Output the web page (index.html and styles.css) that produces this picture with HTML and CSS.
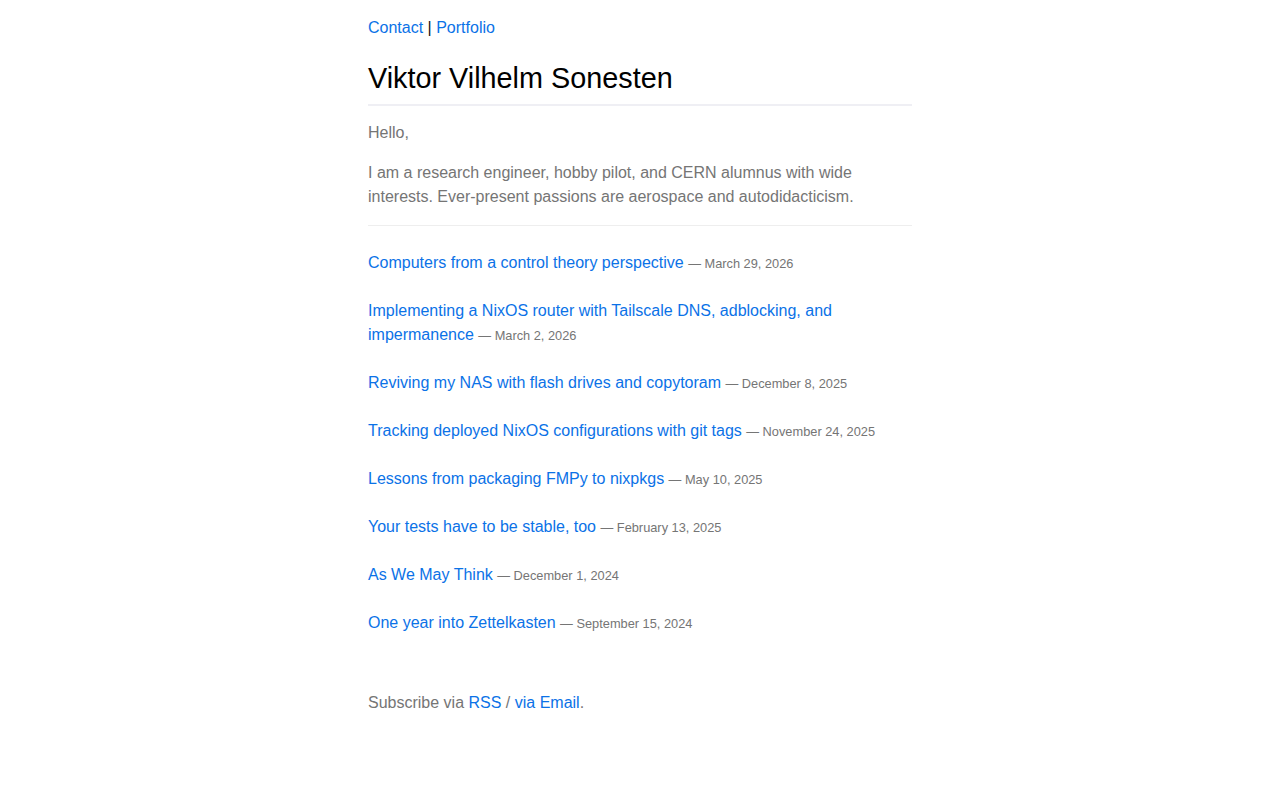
FILE: index.html
```html
<!DOCTYPE html>
<html lang="en">
<head>
    <meta charset="UTF-8">
    <meta name="viewport" content="width=device-width, initial-scale=1.0">
    <title>Viktor Vilhelm Sonesten</title>
    <link rel="stylesheet" href="styles.css">
</head>
<body>
    <div class="container">
        <nav class="nav">
            <a href="#">Contact</a> | <a href="#">Portfolio</a>
        </nav>

        <h1>Viktor Vilhelm Sonesten</h1>

        <p class="intro">Hello,</p>
        <p class="intro">I am a research engineer, hobby pilot, and CERN alumnus with wide interests. Ever-present passions are aerospace and autodidacticism.</p>

        <hr>

        <!-- posts -->
        <ul class="posts">
            <li><a href="#">Computers from a control theory perspective</a> <span class="date">— March 29, 2026</span></li>
            <li><a href="#">Implementing a NixOS router with Tailscale DNS, adblocking, and impermanence</a> <span class="date">— March 2, 2026</span></li>
            <li><a href="#">Reviving my NAS with flash drives and copytoram</a> <span class="date">— December 8, 2025</span></li>
            <li><a href="#">Tracking deployed NixOS configurations with git tags</a> <span class="date">— November 24, 2025</span></li>
            <li><a href="#">Lessons from packaging FMPy to nixpkgs</a> <span class="date">— May 10, 2025</span></li>
            <li><a href="#">Your tests have to be stable, too</a> <span class="date">— February 13, 2025</span></li>
            <li><a href="#">As We May Think</a> <span class="date">— December 1, 2024</span></li>
            <li><a href="#">One year into Zettelkasten</a> <span class="date">— September 15, 2024</span></li>
        </ul>

        <p class="subscribe">Subscribe via <a href="#">RSS</a> / <a href="#">via Email</a>.</p>
    </div>
</body>
</html>
```

FILE: styles.css
```css
/* base */
body {
    margin: 0;
    padding: 16px 0;
    font-family: "Liberation Sans", Arial, sans-serif;
    font-size: 16px;
    line-height: 24px;
    color: #757575;
    background-color: #fff;
}
.container {
    width: 544px;
    margin: 0 auto;
}
a {
    color: #0b72e7;
    text-decoration: none;
}

/* header */
.nav {
    color: #111;
}
h1 {
    margin: 18px 0 15px;
    padding-bottom: 6px;
    font-size: 28.8px;
    font-weight: normal;
    line-height: 40px;
    color: #000;
    border-bottom: 2px solid #efeff4;
}
.intro {
    margin: 0 0 16px;
}

hr {
    margin: 16px 0 25px;
    border: none;
    border-top: 1px solid #eeeeee;
}

/* post list */
.posts {
    list-style: none;
    margin: 0;
    padding: 0;
}
.posts li {
    margin-bottom: 24px;
}
.date {
    font-size: 12.8px;
    line-height: 1;
}

.subscribe {
    margin: 56px 0 0;
}
```
